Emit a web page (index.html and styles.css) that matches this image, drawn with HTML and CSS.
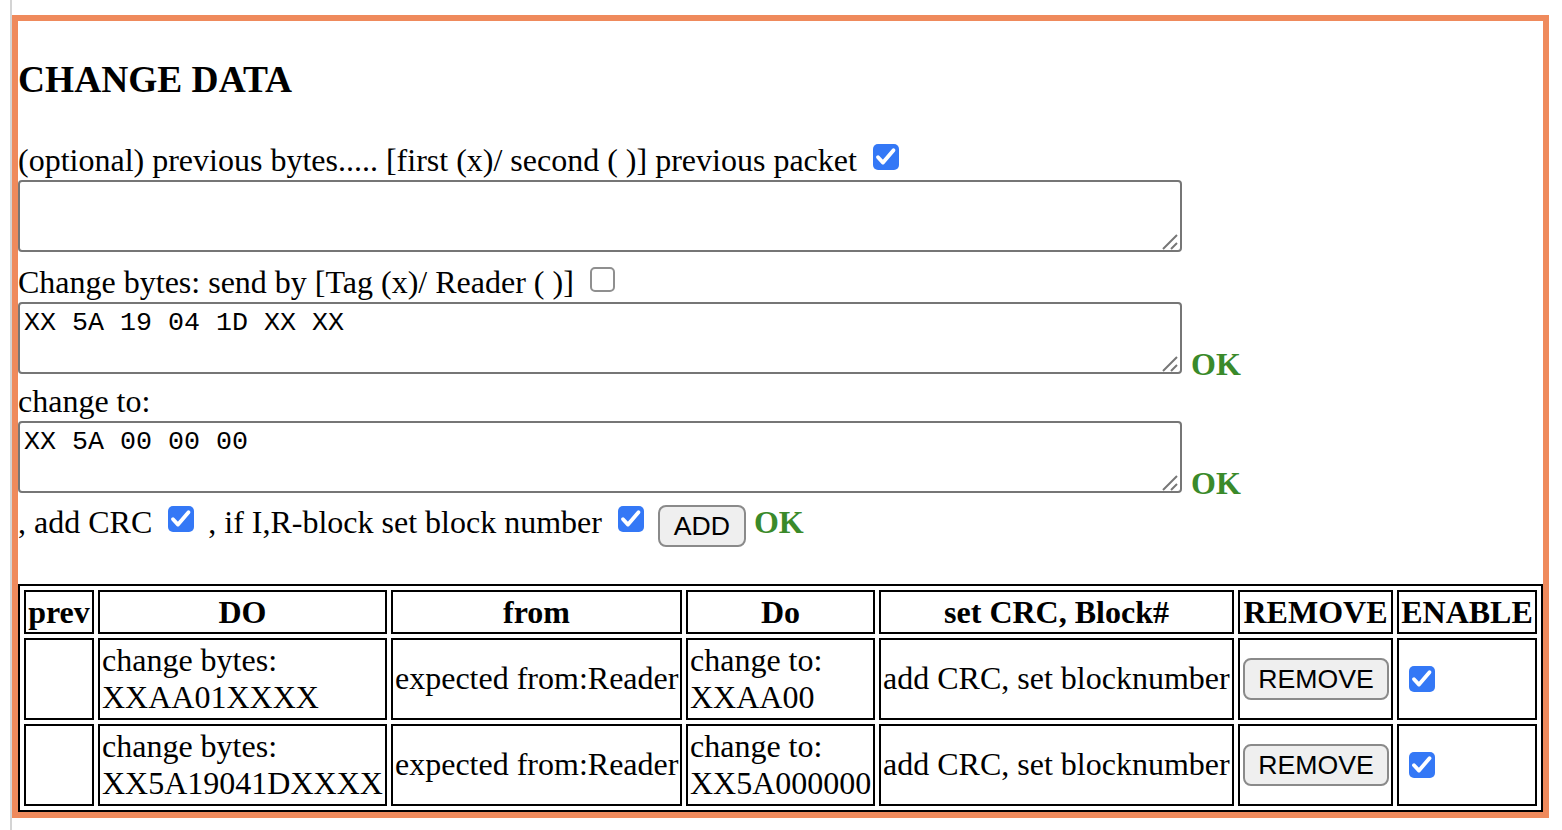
FILE: index.html
```html
<!DOCTYPE html>
<html>
<head>
<meta charset="utf-8">
<title>Change data</title>
<link rel="stylesheet" href="styles.css">
</head>
<body>
<div class="page">
  <div class="box">
    <h3 class="title">CHANGE DATA</h3>

    <div class="row row-1">(optional) previous bytes..... [first (x)/ second ( )] previous packet <input type="checkbox" class="cb" checked></div>
    <div class="ta-row ta-1"><textarea class="bytes"></textarea></div>

    <div class="row row-2">Change bytes: send by [Tag (x)/ Reader ( )] <input type="checkbox" class="cb"></div>
    <div class="ta-row ta-2"><textarea class="bytes">XX 5A 19 04 1D XX XX</textarea><span class="ok">OK</span></div>

    <div class="row row-3">change to:</div>
    <div class="ta-row ta-3"><textarea class="bytes">XX 5A 00 00 00</textarea><span class="ok">OK</span></div>

    <div class="row row-4">, add CRC <input type="checkbox" class="cb" checked> , if I,R-block set block number <input type="checkbox" class="cb" checked> <button class="btn btn-add">ADD</button> <span class="ok ok-inline">OK</span></div>

    <table class="rules">
      <thead>
        <tr>
          <th class="c-prev">prev</th>
          <th class="c-do">DO</th>
          <th class="c-from">from</th>
          <th class="c-do2">Do</th>
          <th class="c-crc">set CRC, Block#</th>
          <th class="c-rem">REMOVE</th>
          <th class="c-en">ENABLE</th>
        </tr>
      </thead>
      <tbody>
        <tr>
          <td></td>
          <td>change bytes:<br>XXAA01XXXX</td>
          <td>expected from:Reader</td>
          <td>change to:<br>XXAA00</td>
          <td>add CRC, set blocknumber</td>
          <td><button class="btn btn-remove">REMOVE</button></td>
          <td><input type="checkbox" class="cb" checked></td>
        </tr>
        <tr>
          <td></td>
          <td>change bytes:<br>XX5A19041DXXXX</td>
          <td>expected from:Reader</td>
          <td>change to:<br>XX5A000000</td>
          <td>add CRC, set blocknumber</td>
          <td><button class="btn btn-remove">REMOVE</button></td>
          <td><input type="checkbox" class="cb" checked></td>
        </tr>
      </tbody>
    </table>
  </div>
</div>
</body>
</html>
```

FILE: styles.css
```css
html, body {
  margin: 0;
  padding: 0;
  background: #ffffff;
}

body {
  font-family: "Liberation Serif", "Times New Roman", serif;
  font-size: 32px;
  color: #000000;
}

.page {
  margin-left: 10px;
  border-left: 2px solid #d4d4d4;
  padding: 15px 13px 0 0;
  height: 830px;
  box-sizing: border-box;
}

.box {
  border: 6px solid #ef8a5c;
}

.title {
  font-size: 37.44px;
  line-height: 43px;
  font-weight: bold;
  margin: 37px 0 41px 0;
}

.row {
  line-height: 36px;
  white-space: nowrap;
}

.row-2 { margin-top: 12px; }
.row-3 { margin-top: 9px; }
.row-4 { margin-top: 11px; }

.ta-row {
  display: flex;
  align-items: flex-end;
  margin-top: 2px;
}

.bytes {
  display: block;
  width: 1164px;
  height: 72px;
  box-sizing: border-box;
  margin: 0;
  padding: 4px;
  border: 2px solid #767676;
  border-radius: 4px;
  font-family: "Liberation Mono", "Courier New", monospace;
  font-size: 26.67px;
  line-height: 30.2px;
  color: #000000;
  resize: none;
  background-color: #ffffff;
  background-image: url("data:image/svg+xml;utf8,<svg xmlns='http://www.w3.org/2000/svg' viewBox='0 0 20 20'><path d='M3 19 L17 5 M11 19 L17 13' stroke='%23777777' stroke-width='2' fill='none'/></svg>");
  background-repeat: no-repeat;
  background-position: right bottom;
  background-size: 20px 20px;
}

.ok {
  display: block;
  font-weight: bold;
  color: #3a8a2a;
  font-size: 32px;
  line-height: 36px;
  margin-left: 9px;
  margin-bottom: -8px;
}

.ok-inline {
  display: inline;
  margin: 0;
}

/* checkboxes */
.cb {
  -webkit-appearance: none;
  appearance: none;
  display: inline-block;
  width: 26px;
  height: 26px;
  margin: 0 6px 0 8px;
  box-sizing: border-box;
  border: 2px solid #8f8f8f;
  border-radius: 5px;
  background: #ffffff;
  vertical-align: 1px;
}

.row-2 .cb {
  width: 25px;
  height: 25px;
}

.cb:checked {
  border: none;
  background-color: #3478f6;
  background-image: url("data:image/svg+xml;utf8,<svg xmlns='http://www.w3.org/2000/svg' viewBox='0 0 26 26'><path d='M5 13.2 L10 18.6 L20.5 6.2' fill='none' stroke='white' stroke-width='3.8' stroke-linecap='round' stroke-linejoin='round'/></svg>");
  background-repeat: no-repeat;
  background-size: 26px 26px;
}

.rules .cb {
  vertical-align: -3px;
}

/* buttons */
.btn {
  font-family: "Liberation Sans", Arial, sans-serif;
  font-size: 26.67px;
  color: #000000;
  background: #efefef;
  border: 2px solid #8a8a8a;
  border-radius: 8px;
  height: 42px;
  padding: 0 14px;
  margin: 0;
  box-sizing: border-box;
  line-height: 36px;
}

.btn-add {
  width: 88px;
  padding: 0;
  vertical-align: middle;
}

.btn-remove {
  width: 146px;
  padding: 0;
  margin-left: 1px;
  vertical-align: middle;
}

/* table */
.rules {
  width: 100%;
  table-layout: fixed;
  border: 2px solid #000000;
  border-spacing: 4px;
  margin-top: 37px;
}

.rules th,
.rules td {
  border: 2px solid #000000;
  padding: 2px;
  box-sizing: border-box;
  white-space: nowrap;
  overflow: visible;
  vertical-align: middle;
}

.rules th {
  font-weight: bold;
  text-align: center;
  line-height: 36px;
}

.rules td {
  text-align: left;
  line-height: 37px;
}

.c-prev { width: 70px; }
.c-do { width: 289px; }
.c-from { width: 291px; }
.c-do2 { width: 189px; }
.c-crc { width: 355px; }
.c-rem { width: 155px; }
.c-en { width: 140px; }
```
